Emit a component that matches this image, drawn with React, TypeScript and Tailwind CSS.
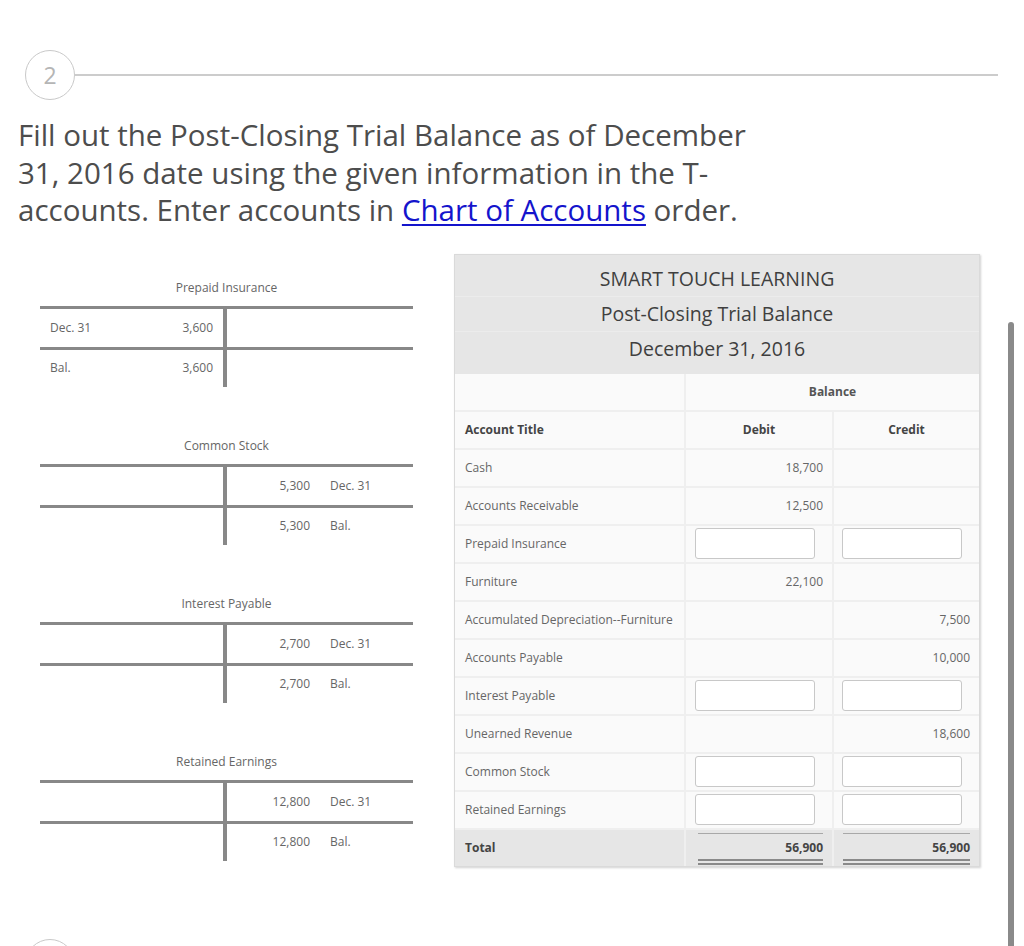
import React from "react";

type TAcc = {
  title: string;
  side: "debit" | "credit";
  rows: { label: string; amount: string }[];
};

const taccounts: TAcc[] = [
  { title: "Prepaid Insurance", side: "debit", rows: [{ label: "Dec. 31", amount: "3,600" }, { label: "Bal.", amount: "3,600" }] },
  { title: "Common Stock", side: "credit", rows: [{ label: "Dec. 31", amount: "5,300" }, { label: "Bal.", amount: "5,300" }] },
  { title: "Interest Payable", side: "credit", rows: [{ label: "Dec. 31", amount: "2,700" }, { label: "Bal.", amount: "2,700" }] },
  { title: "Retained Earnings", side: "credit", rows: [{ label: "Dec. 31", amount: "12,800" }, { label: "Bal.", amount: "12,800" }] },
];

function TAccount({ acc }: { acc: TAcc }) {
  return (
    <div>
      <div className="text-center text-[12px] leading-[18px] text-[#666]">{acc.title}</div>
      <div className="mt-[9px]">
        {acc.rows.map((r, i) => (
          <div key={i}>
            <div className="h-[3px] bg-[#888]" />
            <div className={`flex ${i === 0 ? "h-[38px]" : "h-[37px]"} items-center text-[12px] text-[#666]`}>
              <div className="flex w-[183px] justify-between pl-[10px] pr-[10px]">
                {acc.side === "debit" ? (
                  <>
                    <span>{r.label}</span>
                    <span>{r.amount}</span>
                  </>
                ) : null}
              </div>
              <div className="h-full w-[4px] bg-[#888]" />
              <div className="flex flex-1">
                {acc.side === "credit" ? (
                  <>
                    <span className="w-[83px] text-right">{r.amount}</span>
                    <span className="ml-[20px]">{r.label}</span>
                  </>
                ) : null}
              </div>
            </div>
          </div>
        ))}
      </div>
    </div>
  );
}

type Row = { name: string; debit?: string; credit?: string; input?: boolean };

const rows: Row[] = [
  { name: "Cash", debit: "18,700" },
  { name: "Accounts Receivable", debit: "12,500" },
  { name: "Prepaid Insurance", input: true },
  { name: "Furniture", debit: "22,100" },
  { name: "Accumulated Depreciation--Furniture", credit: "7,500" },
  { name: "Accounts Payable", credit: "10,000" },
  { name: "Interest Payable", input: true },
  { name: "Unearned Revenue", credit: "18,600" },
  { name: "Common Stock", input: true },
  { name: "Retained Earnings", input: true },
];

function InputBox() {
  return <div className="mx-auto h-[31px] w-[120px] rounded-[3px] border border-[#c8c8c8] bg-white" />;
}

function TotalCell({ value, padL, padR }: { value: string; padL: string; padR: string }) {
  return (
    <div className={`h-[36px] bg-[#e6e6e6] pt-[3px] ${padL} ${padR}`}>
      <div className="h-[1px] bg-[#a8a8a8]" />
      <div className="h-[25px] text-right text-[12px] font-bold leading-[27px] text-[#444]">{value}</div>
      <div className="h-[2px] bg-[#8a8a8a]" />
      <div className="mt-[2px] h-[2px] bg-[#8a8a8a]" />
    </div>
  );
}

export default function App() {
  return (
    <div className="relative h-[946px] w-[1024px] overflow-hidden bg-white font-['Open_Sans',sans-serif]">
      <div className="pl-[25px] pr-[26px] pt-[50px]">
        <div className="flex items-center">
          <div className="flex h-[50px] w-[50px] items-center justify-center rounded-full border-[1.5px] border-[#c9c9c9] text-[23px] text-[#b5b5b5]">
            2
          </div>
          <div className="h-[1.5px] flex-1 bg-[#cccccc]" />
        </div>
      </div>

      <p className="ml-[18px] mt-[16px] text-[29.5px] leading-[37.5px] text-[#4d4d4d]">
        Fill out the Post-Closing Trial Balance as of December
        <br />
        31, 2016 date using the given information in the T-
        <br />
        accounts. Enter accounts in{" "}
        <a className="text-[#1414cc] underline decoration-[1.5px] underline-offset-[3px]">Chart of Accounts</a> order.
      </p>

      <div className="mt-[25px] flex pl-[40px]">
        <div className="flex w-[373px] flex-col gap-[50px] pt-[25px]">
          {taccounts.map((a) => (
            <TAccount key={a.title} acc={a} />
          ))}
        </div>

        <div className="ml-[41px] w-[526px] border border-[#dadada] shadow-[1px_1px_2px_rgba(0,0,0,0.18)]">
          <div className="bg-[#e6e6e6] pb-[8px] pt-[7px] text-center text-[19.5px] leading-[34px] text-[#3f3f3f]">
            <div className="border-b border-[#ececec]">SMART TOUCH LEARNING</div>
            <div className="border-b border-[#ececec]">Post-Closing Trial Balance</div>
            <div>December 31, 2016</div>
          </div>
          <div className="grid grid-cols-[229px_146px_145px] gap-[2px] bg-[#efefef] text-[12px]">
            <div className="h-[36px] bg-[#fafafa]" />
            <div className="col-span-2 flex h-[36px] items-center justify-center bg-[#fafafa] font-bold text-[#555]">
              Balance
            </div>

            <div className="flex h-[36px] items-center bg-[#fafafa] pl-[10px] font-bold text-[#444]">Account Title</div>
            <div className="flex h-[36px] items-center justify-center bg-[#fafafa] font-bold text-[#444]">Debit</div>
            <div className="flex h-[36px] items-center justify-center bg-[#fafafa] font-bold text-[#444]">Credit</div>

            {rows.map((r) => (
              <React.Fragment key={r.name}>
                <div className="flex h-[36px] items-center bg-[#fafafa] pl-[10px] text-[#666]">{r.name}</div>
                <div className="flex h-[36px] items-center justify-end bg-[#fafafa] pr-[9px] text-[#666]">
                  {r.input ? <InputBox /> : r.debit}
                </div>
                <div className="flex h-[36px] items-center justify-end bg-[#fafafa] pr-[9px] text-[#666]">
                  {r.input ? <InputBox /> : r.credit}
                </div>
              </React.Fragment>
            ))}

            <div className="flex h-[36px] items-center bg-[#e6e6e6] pl-[10px] font-bold text-[#444]">Total</div>
            <TotalCell value="56,900" padL="pl-[12px]" padR="pr-[9px]" />
            <TotalCell value="56,900" padL="pl-[9px]" padR="pr-[9px]" />
          </div>
        </div>
      </div>

      <div className="mt-[72px] pl-[25px]">
        <div className="h-[50px] w-[50px] rounded-full border-[1.5px] border-[#c9c9c9]" />
      </div>

      <div className="absolute left-[1008px] top-[322px] h-[640px] w-[6px] rounded-full bg-[#8a8a8a]" />
    </div>
  );
}
